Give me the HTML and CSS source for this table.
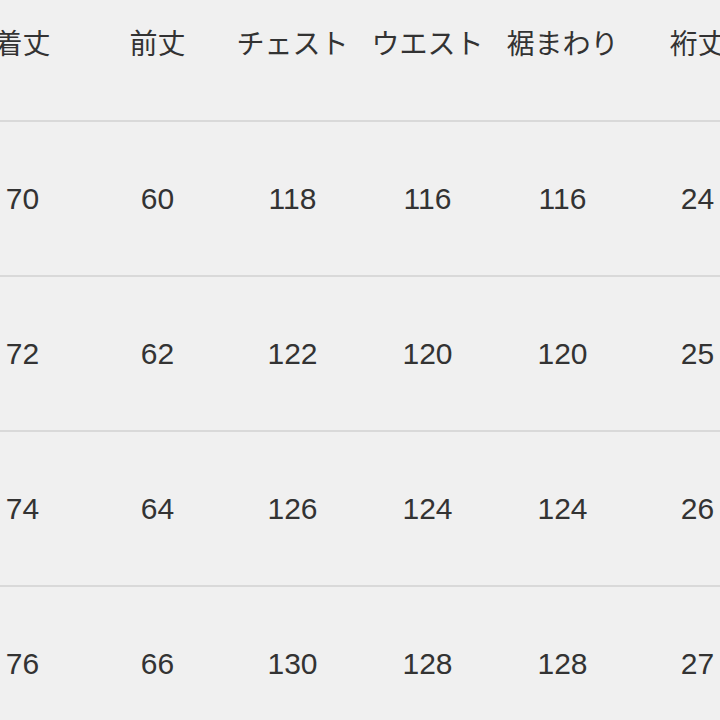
FILE: index.html
```html
<!DOCTYPE html>
<html lang="ja">
<head>
<meta charset="utf-8">
<link rel="stylesheet" href="styles.css">
</head>
<body>
<div class="sheet">
  <div class="row head">
    <div class="cell">着丈</div>
    <div class="cell">前丈</div>
    <div class="cell">チェスト</div>
    <div class="cell">ウエスト</div>
    <div class="cell">裾まわり</div>
    <div class="cell">裄丈</div>
  </div>
  <div class="row">
    <div class="cell">70</div><div class="cell">60</div><div class="cell">118</div><div class="cell">116</div><div class="cell">116</div><div class="cell">24</div>
  </div>
  <div class="row">
    <div class="cell">72</div><div class="cell">62</div><div class="cell">122</div><div class="cell">120</div><div class="cell">120</div><div class="cell">25</div>
  </div>
  <div class="row">
    <div class="cell">74</div><div class="cell">64</div><div class="cell">126</div><div class="cell">124</div><div class="cell">124</div><div class="cell">26</div>
  </div>
  <div class="row">
    <div class="cell">76</div><div class="cell">66</div><div class="cell">130</div><div class="cell">128</div><div class="cell">128</div><div class="cell">27</div>
  </div>
</div>
</body>
</html>
```

FILE: styles.css
```css
html, body {
  margin: 0;
  padding: 0;
  background: #f0f0f0;
  overflow: hidden;
}
body {
  width: 720px;
  height: 720px;
  font-family: "Liberation Sans", "Noto Sans CJK JP", sans-serif;
  color: #333333;
}
.sheet {
  margin-left: -45px;
  width: 810px;
}
.row {
  display: grid;
  grid-template-columns: repeat(6, 135px);
  align-items: center;
  height: 155px;
  box-sizing: border-box;
  border-top: 2px solid #d9d9d9;
  font-size: 30px;
  line-height: 34px;
}
.row.head {
  height: 120px;
  border-top: none;
  align-items: start;
  padding-top: 26px;
  font-family: "Noto Sans CJK JP", sans-serif;
  font-size: 28px;
  line-height: 32px;
  color: #333333;
}
.cell {
  text-align: center;
  white-space: nowrap;
}
```
